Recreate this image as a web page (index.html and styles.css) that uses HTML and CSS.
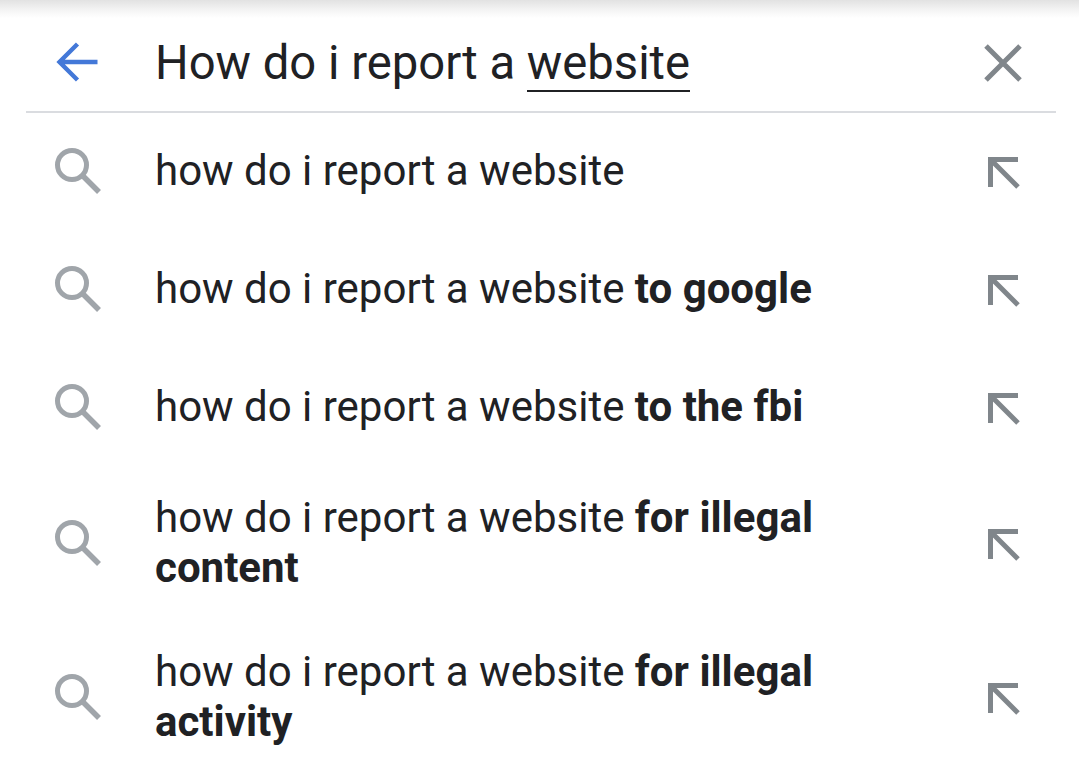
FILE: index.html
```html
<!DOCTYPE html>
<html>
<head>
<title>Search</title>
<link rel="stylesheet" href="styles.css">
</head>
<body>
  <div class="search-bar">
    <svg class="icon-back" width="48" height="48" viewBox="0 0 48 48">
      <path d="M43.5 24H5M23.5 6L5.5 24L23.5 42" fill="none" stroke="#4378d8" stroke-width="4.4"/>
    </svg>
    <div class="query">How do i report a <span class="composing">website</span></div>
    <svg class="icon-clear" width="44" height="44" viewBox="0 0 44 44">
      <path d="M5 5L39 39M39 5L5 39" fill="none" stroke="#80868b" stroke-width="5"/>
    </svg>
  </div>
  <div class="divider"></div>

  <ul class="suggestions">
    <li class="row">
      <svg class="icon-search" width="48" height="48" viewBox="0 0 48 48">
        <circle cx="18" cy="18" r="14.5" fill="none" stroke="#a0a5aa" stroke-width="5"/>
        <path d="M28 28L45 45" fill="none" stroke="#a0a5aa" stroke-width="5.5"/>
      </svg>
      <div class="text">how do i report a website</div>
      <svg class="icon-fill" width="34" height="34" viewBox="0 0 34 34">
        <path d="M31 3.5H3.5V31M3.5 3.5L31 31" fill="none" stroke="#80868b" stroke-width="5"/>
      </svg>
    </li>
    <li class="row">
      <svg class="icon-search" width="48" height="48" viewBox="0 0 48 48">
        <circle cx="18" cy="18" r="14.5" fill="none" stroke="#a0a5aa" stroke-width="5"/>
        <path d="M28 28L45 45" fill="none" stroke="#a0a5aa" stroke-width="5.5"/>
      </svg>
      <div class="text">how do i report a website <b>to google</b></div>
      <svg class="icon-fill" width="34" height="34" viewBox="0 0 34 34">
        <path d="M31 3.5H3.5V31M3.5 3.5L31 31" fill="none" stroke="#80868b" stroke-width="5"/>
      </svg>
    </li>
    <li class="row">
      <svg class="icon-search" width="48" height="48" viewBox="0 0 48 48">
        <circle cx="18" cy="18" r="14.5" fill="none" stroke="#a0a5aa" stroke-width="5"/>
        <path d="M28 28L45 45" fill="none" stroke="#a0a5aa" stroke-width="5.5"/>
      </svg>
      <div class="text">how do i report a website <b>to the fbi</b></div>
      <svg class="icon-fill" width="34" height="34" viewBox="0 0 34 34">
        <path d="M31 3.5H3.5V31M3.5 3.5L31 31" fill="none" stroke="#80868b" stroke-width="5"/>
      </svg>
    </li>
    <li class="row">
      <svg class="icon-search" width="48" height="48" viewBox="0 0 48 48">
        <circle cx="18" cy="18" r="14.5" fill="none" stroke="#a0a5aa" stroke-width="5"/>
        <path d="M28 28L45 45" fill="none" stroke="#a0a5aa" stroke-width="5.5"/>
      </svg>
      <div class="text">how do i report a website <b>for illegal content</b></div>
      <svg class="icon-fill" width="34" height="34" viewBox="0 0 34 34">
        <path d="M31 3.5H3.5V31M3.5 3.5L31 31" fill="none" stroke="#80868b" stroke-width="5"/>
      </svg>
    </li>
    <li class="row">
      <svg class="icon-search" width="48" height="48" viewBox="0 0 48 48">
        <circle cx="18" cy="18" r="14.5" fill="none" stroke="#a0a5aa" stroke-width="5"/>
        <path d="M28 28L45 45" fill="none" stroke="#a0a5aa" stroke-width="5.5"/>
      </svg>
      <div class="text">how do i report a website <b>for illegal activity</b></div>
      <svg class="icon-fill" width="34" height="34" viewBox="0 0 34 34">
        <path d="M31 3.5H3.5V31M3.5 3.5L31 31" fill="none" stroke="#80868b" stroke-width="5"/>
      </svg>
    </li>
  </ul>
</body>
</html>
```

FILE: styles.css
```css
body {
  margin: 0;
  height: 772px;
  overflow: hidden;
  background: #fff;
  color: #202124;
  font-family: Roboto, sans-serif;
  background-image: linear-gradient(#e2e2e2, #f4f4f4 10px, #fff 18px);
  background-repeat: no-repeat;
  background-size: 100% 18px;
}
.search-bar {
  display: flex;
  align-items: center;
  height: 112px;
  padding: 14px 54px 0 54px;
  box-sizing: border-box;
}
.icon-back {
  flex: none;
  margin: 0 53px 3px 0;
}
.query {
  flex: 1;
  font-size: 47.2px;
  line-height: 56px;
}
.composing {
  display: inline-block;
  line-height: 54px;
  border-bottom: 2px solid #202124;
}
.icon-clear {
  flex: none;
}
.divider {
  height: 2px;
  margin: -1px 23px -1px 26px;
  background: #dadce0;
}
.suggestions {
  list-style: none;
  margin: 0;
  padding: 0;
}
.row {
  display: flex;
  align-items: center;
  min-height: 118px;
  padding: 27px 58px 27px 54px;
  box-sizing: border-box;
}
.icon-search {
  flex: none;
  margin-right: 53px;
}
.text {
  flex: none;
  width: 700px;
  font-size: 42px;
  line-height: 50px;
}
.text b {
  font-weight: 700;
}
.icon-fill {
  flex: none;
  margin: 3px 0 0 auto;
}
```
